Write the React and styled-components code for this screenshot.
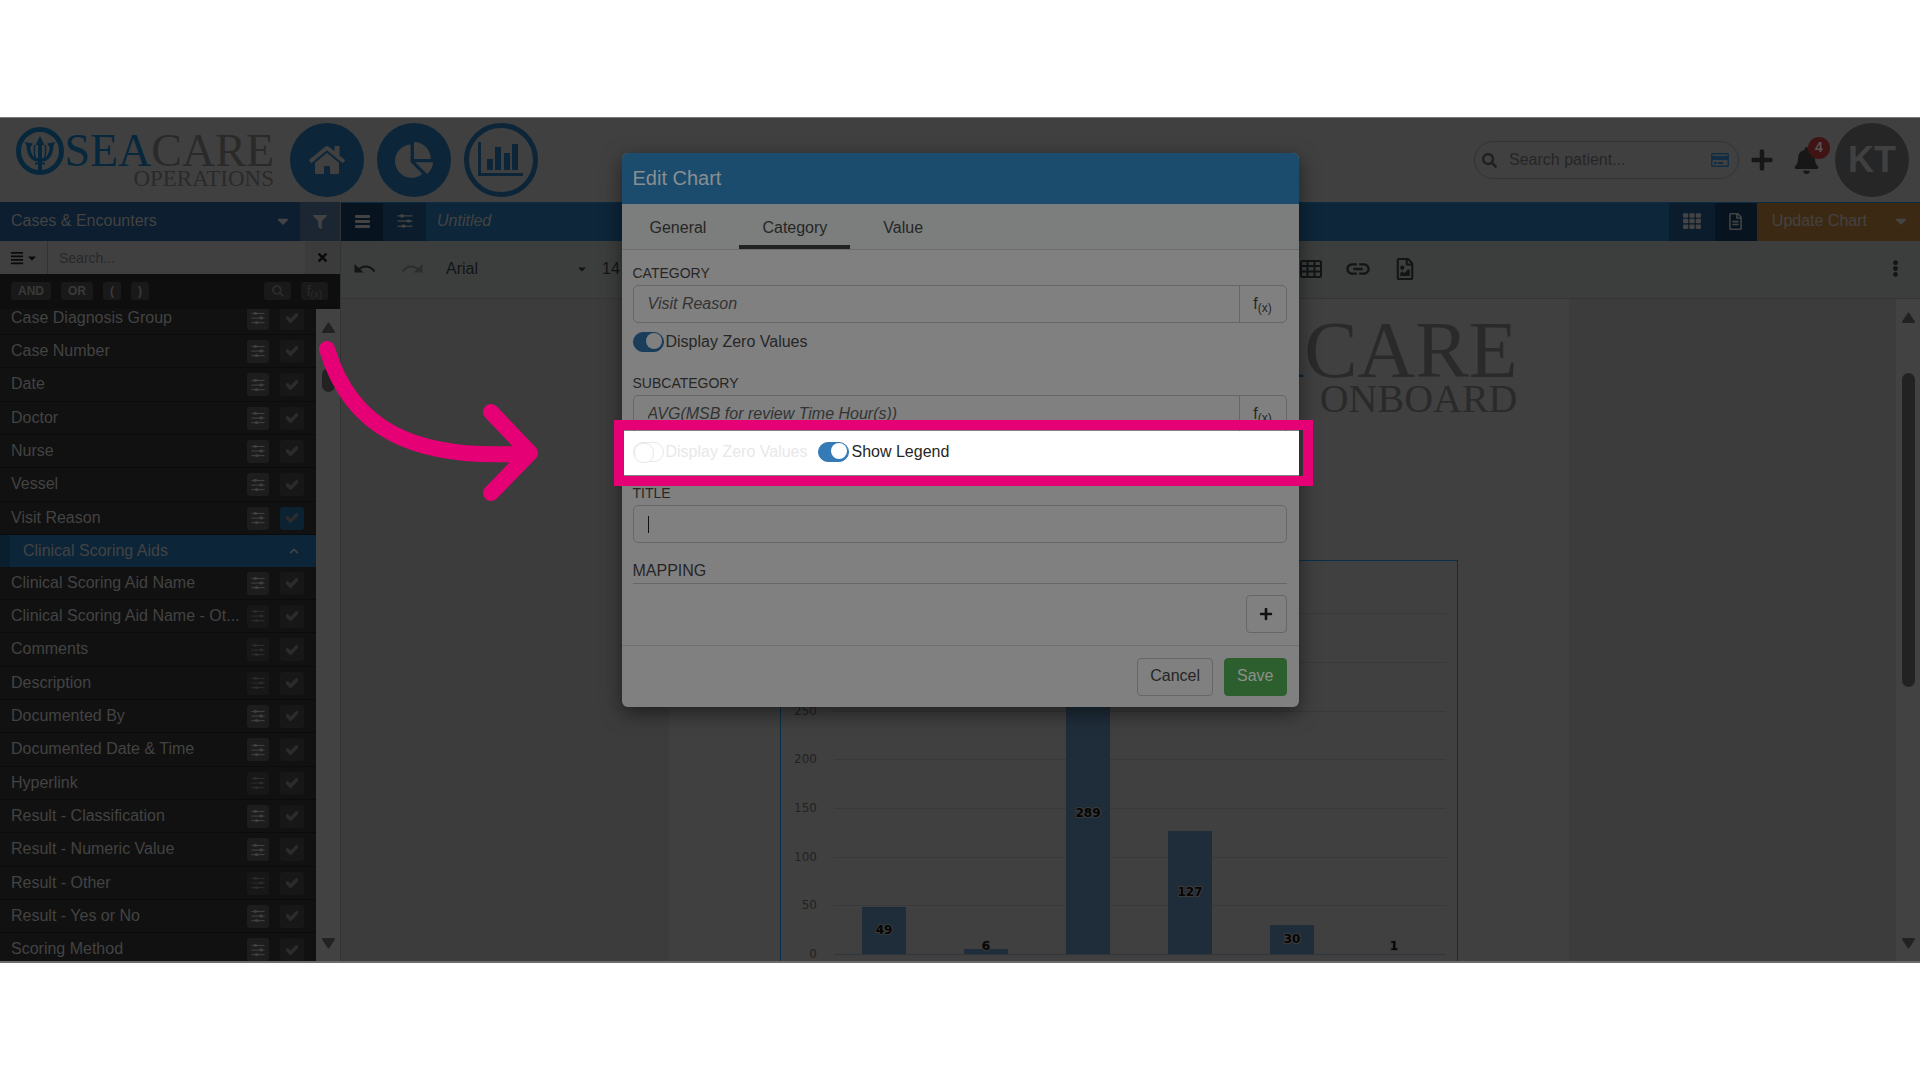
import React from 'react'
import { useState } from 'react'
import styled, { createGlobalStyle } from 'styled-components'
import {
  FaHome, FaChartPie, FaSearch, FaPlus, FaBell, FaFilter, FaTimes, FaCheck,
  FaTh, FaRegFileAlt, FaCaretDown, FaRegCreditCard, FaRegFileImage, FaAlignJustify,
  FaEllipsisV, FaChevronUp
} from 'react-icons/fa'
import { MdLink } from 'react-icons/md'

const caseFields = [
  { name: 'Case Diagnosis Group' },
  { name: 'Case Number' },
  { name: 'Date' },
  { name: 'Doctor' },
  { name: 'Nurse' },
  { name: 'Vessel' },
  { name: 'Visit Reason', checked: true },
]

const scoringFields = [
  { name: 'Clinical Scoring Aid Name' },
  { name: 'Clinical Scoring Aid Name - Ot...', dim: true },
  { name: 'Comments', dim: true },
  { name: 'Description', dim: true },
  { name: 'Documented By' },
  { name: 'Documented Date & Time' },
  { name: 'Hyperlink', dim: true },
  { name: 'Result - Classification' },
  { name: 'Result - Numeric Value' },
  { name: 'Result - Other', dim: true },
  { name: 'Result - Yes or No' },
  { name: 'Scoring Method' },
]

const bars = [49, 6, 289, 127, 30, 1]
const ticks = [0, 50, 100, 150, 200, 250, 300, 350]

function Sliders({ size = 16 }) {
  return (
    <svg width={size} height={size} viewBox="0 0 16 16" fill="currentColor" aria-hidden="true">
      <rect x="0.500" y="2.200" width="15" height="1.300" />
      <rect x="0.500" y="7.400" width="15" height="1.300" />
      <rect x="0.500" y="12.600" width="15" height="1.300" />
      <rect x="3" y="1.200" width="4" height="3.200" rx="1.500" />
      <rect x="9.500" y="6.400" width="4" height="3.200" rx="1.500" />
      <rect x="4.500" y="11.600" width="4" height="3.200" rx="1.500" />
    </svg>
  )
}

function Trident() {
  return (
    <svg width="48" height="48" viewBox="0 0 48 48" fill="none" stroke="#07273d" aria-hidden="true">
      <circle cx="24" cy="24" r="21.500" strokeWidth="5" />
      <path d="M24 14V45" strokeWidth="4" />
      <path d="M24 9L28.500 18H19.500Z" fill="#07273d" strokeWidth="0" />
      <path d="M12 17C13 29 16 33 24 33S35 29 36 17" strokeWidth="3.500" />
      <path d="M8.500 15L17 16.500L13 22ZM39.500 15L31 16.500L35 22Z" fill="#07273d" strokeWidth="0" />
      <path d="M18.500 18C18.500 26 18 29 20 33M29.500 18C29.500 26 30 29 28 33" strokeWidth="1.500" />
      <path d="M19 36.500H29" strokeWidth="2" />
    </svg>
  )
}

function Burger() {
  return (
    <svg width="15" height="13" viewBox="0 0 15 13" fill="currentColor" aria-hidden="true">
      <rect width="15" height="3" rx="1" />
      <rect y="5" width="15" height="3" rx="1" />
      <rect y="10" width="15" height="3" rx="1" />
    </svg>
  )
}

function BarsIcon() {
  return (
    <svg width="46" height="36" viewBox="0 0 46 36" fill="currentColor" aria-hidden="true">
      <path d="M0 0H3V31H45V34H0Z" />
      <rect x="9" y="17" width="6" height="11" />
      <rect x="17" y="5" width="6" height="23" />
      <rect x="26" y="11" width="6" height="17" />
      <rect x="34" y="2" width="6" height="26" />
    </svg>
  )
}

function CurvedArrow({ flip }) {
  return (
    <svg width="22" height="12" viewBox="0 0 22 12" fill="none" stroke="currentColor" aria-hidden="true">
      <g transform={flip ? 'translate(22 0) scale(-1 1)' : undefined}>
        <path d="M4 7C9 2 16 2 20.500 8.500" strokeWidth="2" />
        <path d="M0.500 1V9.500H9.500Z" fill="currentColor" strokeWidth="0" />
      </g>
    </svg>
  )
}

function TableIcon() {
  return (
    <svg width="22" height="18" viewBox="0 0 22 18" fill="none" stroke="currentColor" strokeWidth="2" aria-hidden="true">
      <rect x="1" y="1" width="20" height="16" rx="1.500" />
      <path d="M1 6H21M1 11.500H21M7.500 1V17M14.500 1V17" />
    </svg>
  )
}

function Triangle({ down }) {
  return (
    <svg width="15" height="11" viewBox="0 0 14 11" aria-hidden="true">
      <path
        d={down ? 'M1.500 1H12.500L7 9.500Z' : 'M1.500 10H12.500L7 1.500Z'}
        fill="#222" stroke="#222" strokeWidth="2" strokeLinejoin="round"
      />
    </svg>
  )
}

function FieldRow({ field }) {
  return (
    <Row>
      <span>{field.name}</span>
      <RowButton $dim={field.dim} aria-label={`Options for ${field.name}`}><Sliders size={14} /></RowButton>
      <RowButton $wide $dim $checked={field.checked} aria-label={`Select ${field.name}`}>
        <FaCheck size={12} stroke="currentColor" strokeWidth={50} />
      </RowButton>
    </Row>
  )
}

function Chart() {
  const y = (v) => 393 - v * 0.973
  return (
    <ChartSvg width="676" height="460" viewBox="0 0 676 460">
      {ticks.map((t) => (
        <g key={t}>
          <line x1="53" x2="665" y1={Math.round(y(t)) + 0.5} y2={Math.round(y(t)) + 0.5} stroke={t ? '#393939' : '#30343b'} />
          <text className="tick" x="36" y={Math.round(y(t)) + 4} textAnchor="end">{t}</text>
        </g>
      ))}
      {bars.map((v, i) => (
        <g key={v}>
          {v > 1 && <rect x={81 + i * 102} y={Math.ceil(y(v))} width="44" height={393 - Math.ceil(y(v))} fill="#1f2d3a" />}
          <text className="value" x={103 + i * 102} y={v < 10 ? 389 : Math.round(y(v / 2)) + 4} textAnchor="middle">{v}</text>
        </g>
      ))}
    </ChartSvg>
  )
}

function EditChart() {
  const [zero, setZero] = useState(true)
  const [legend, setLegend] = useState(true)
  const [title, setTitle] = useState('')
  return (
    <Modal role="dialog" aria-label="Edit Chart">
      <ModalHead>Edit Chart</ModalHead>
      <Tabs>
        <Tab>General</Tab>
        <Tab $active>Category</Tab>
        <Tab>Value</Tab>
      </Tabs>
      <ModalBody>
        <Label htmlFor="category">CATEGORY</Label>
        <InputGroup>
          <input id="category" defaultValue="Visit Reason" />
          <button>f<sub>(x)</sub></button>
        </InputGroup>
        <SwitchRow>
          <Switch><input type="checkbox" checked={zero} onChange={() => setZero(!zero)} />Display Zero Values</Switch>
        </SwitchRow>
        <Label htmlFor="subcategory">SUBCATEGORY</Label>
        <InputGroup>
          <input id="subcategory" defaultValue="AVG(MSB for review Time Hour(s))" />
          <button>f<sub>(x)</sub></button>
        </InputGroup>
        <Spotlight>
          <Switch $bright $off><input type="checkbox" disabled />Display Zero Values</Switch>
          <Switch $bright><input type="checkbox" checked={legend} onChange={() => setLegend(!legend)} />Show Legend</Switch>
        </Spotlight>
        <Label htmlFor="title">TITLE</Label>
        <InputGroup $caret={!title}>
          <input id="title" value={title} onChange={(e) => setTitle(e.target.value)} />
        </InputGroup>
        <Mapping>MAPPING</Mapping>
        <AddRow>
          <ModalButton $icon aria-label="Add mapping"><FaPlus size={14} /></ModalButton>
        </AddRow>
      </ModalBody>
      <ModalFoot>
        <ModalButton>Cancel</ModalButton>
        <ModalButton $save>Save</ModalButton>
      </ModalFoot>
    </Modal>
  )
}

function App() {
  return (
    <Page>
      <GlobalStyle />
      <Shell>
        <Header>
          <Brand>
            <Trident />
            <Wordmark $size={46} $sub={23}>
              <div><b>SEA</b>CARE</div>
              <small>OPERATIONS</small>
            </Wordmark>
          </Brand>
          <NavCircle aria-label="Home"><FaHome size={36} /></NavCircle>
          <NavCircle aria-label="Dashboards"><FaChartPie size={38} /></NavCircle>
          <NavCircle $outline aria-label="Reports"><BarsIcon /></NavCircle>
          <Spacer />
          <PatientSearch>
            <FaSearch size={15} />
            <input placeholder="Search patient..." aria-label="Search patient" />
            <FaRegCreditCard size={18} color="#132e44" />
          </PatientSearch>
          <HeaderIcon aria-label="Add"><FaPlus size={24} /></HeaderIcon>
          <HeaderIcon aria-label="Notifications"><FaBell size={27} /><Badge>4</Badge></HeaderIcon>
          <Avatar>KT</Avatar>
        </Header>
        <Content>
          <Sidebar>
            <SideHead>
              <button>Cases &amp; Encounters<FaCaretDown size={18} /></button>
              <FilterButton aria-label="Filter"><FaFilter size={14} /></FilterButton>
            </SideHead>
            <SideSearch>
              <button aria-label="View"><FaAlignJustify size={14} /><FaCaretDown size={12} /></button>
              <input placeholder="Search..." aria-label="Search fields" />
              <ClearButton aria-label="Clear"><FaTimes size={13} /></ClearButton>
            </SideSearch>
            <Operators>
              <button>AND</button>
              <button>OR</button>
              <button>(</button>
              <button>)</button>
              <Spacer />
              <OperatorIcon aria-label="Find"><FaSearch size={12} /></OperatorIcon>
              <OperatorIcon>f<sub>(x)</sub></OperatorIcon>
            </Operators>
            <ListArea>
              <FieldList>
                <Group $cut>{caseFields.map((f) => <FieldRow key={f.name} field={f} />)}</Group>
                <GroupHead>Clinical Scoring Aids<FaChevronUp size={10} /></GroupHead>
                <Group>{scoringFields.map((f) => <FieldRow key={f.name} field={f} />)}</Group>
              </FieldList>
              <ScrollTrack>
                <Triangle />
                <Thumb $top={59} $height={24} />
                <Triangle down />
              </ScrollTrack>
            </ListArea>
          </Sidebar>
          <Main>
            <TitleBar>
              <BarButton $dark aria-label="Menu"><Burger /></BarButton>
              <BarButton aria-label="Settings"><Sliders /></BarButton>
              <em>Untitled</em>
              <Spacer />
              <BarButton $wide aria-label="Grid"><FaTh size={18} /></BarButton>
              <BarButton $dark aria-label="Document"><FaRegFileAlt size={17} /></BarButton>
              <UpdateButton>Update Chart</UpdateButton>
              <UpdateButton $caret aria-label="More"><FaCaretDown size={18} /></UpdateButton>
            </TitleBar>
            <Toolbar>
              <Tool aria-label="Undo"><CurvedArrow /></Tool>
              <Tool $dim aria-label="Redo"><CurvedArrow flip /></Tool>
              <FontPicker>
                <select aria-label="Font"><option>Arial</option></select>
                <FaCaretDown size={12} />
              </FontPicker>
              <SizePicker aria-label="Font size"><option>14</option></SizePicker>
              <Spacer />
              <RightTools>
                <Tool aria-label="Table"><TableIcon /></Tool>
                <Tool aria-label="Link"><MdLink size={28} /></Tool>
                <Tool aria-label="Image"><FaRegFileImage size={22} /></Tool>
                <Spacer />
                <Tool aria-label="More tools"><FaEllipsisV size={17} /></Tool>
              </RightTools>
            </Toolbar>
            <Canvas>
              <Desk>
                <Paper>
                  <Wordmark $size={80} $sub={40}>
                    <div><b>SEA</b>CARE</div>
                    <small>ONBOARD</small>
                  </Wordmark>
                  <ChartBox><Chart /></ChartBox>
                </Paper>
              </Desk>
              <ScrollTrack>
                <Triangle />
                <Thumb $top={74} $height={314} />
                <Triangle down />
              </ScrollTrack>
            </Canvas>
          </Main>
        </Content>
        <Backdrop><EditChart /></Backdrop>
        <Pointer width="230" height="180" viewBox="0 0 230 180" aria-hidden="true">
          <path d="M17 21C40 98 100 134 220 125M181 84L220 125L181 165" />
        </Pointer>
      </Shell>
    </Page>
  )
}

const GlobalStyle = createGlobalStyle`
  * { box-sizing: border-box; }
  body {
    margin: 0;
    background: #fff;
    font-family: 'Liberation Sans', Arial, sans-serif;
    font-size: 16px;
  }
  button, input, select {
    font: inherit;
    color: inherit;
    background: none;
    border: 0;
    border-radius: 0;
    margin: 0;
    padding: 0;
    outline: 0;
  }
  button {
    display: flex;
    align-items: center;
    justify-content: center;
  }
  input { min-width: 0; }
  svg { flex: none; }
`

const Page = styled.div`
  display: flex;
  flex-direction: column;
  height: 100vh;
  padding: 117px 0;
`

const Shell = styled.div`
  position: relative;
  flex: 1;
  min-height: 0;
  display: flex;
  flex-direction: column;
  overflow: hidden;
  background: #404040;
  border-top: 1px solid #777;
  border-bottom: 2px solid #6b6b6b;
`

const Spacer = styled.div`
  flex: 1;
`

const Header = styled.header`
  display: flex;
  align-items: center;
  flex: none;
  height: 84px;
  padding: 0 11px 0 16px;
`

const Brand = styled.div`
  display: flex;
  justify-content: space-between;
  width: 258px;
  height: 54px;
  margin-right: 16px;
  svg { margin-top: -6px; }
`

const Wordmark = styled.div`
  display: flex;
  flex-direction: column;
  align-items: flex-end;
  font-family: 'Liberation Serif', 'Times New Roman', serif;
  color: #2a2a2a;
  div {
    font-size: ${({ $size }) => $size}px;
    line-height: ${({ $size }) => ($size > 60 ? 62 : 36)}px;
  }
  b {
    font-weight: normal;
    color: #07273d;
  }
  small {
    font-size: ${({ $sub }) => $sub}px;
    line-height: ${({ $sub }) => ($sub > 30 ? 36 : 20)}px;
  }
`

const NavCircle = styled.button`
  width: 74px;
  height: 74px;
  margin-right: 13px;
  border-radius: 50%;
  color: ${({ $outline }) => ($outline ? '#0c2538' : '#404040')};
  background: ${({ $outline }) => ($outline ? 'none' : '#0c2538')};
  border: ${({ $outline }) => ($outline ? '5px solid #0c2538' : '0')};
`

const PatientSearch = styled.div`
  display: flex;
  align-items: center;
  width: 265px;
  height: 38px;
  padding: 0 9px 0 7px;
  border: 1px solid #333;
  border-radius: 19px;
  color: #1f1f1f;
  input {
    flex: 1;
    padding-left: 12px;
    &::placeholder { color: #262626; opacity: 1; }
  }
`

const HeaderIcon = styled.button`
  position: relative;
  width: 24px;
  margin-left: 11px;
  color: #171717;
  & + & { margin-left: 20px; }
`

const Badge = styled.span`
  position: absolute;
  top: -10px;
  right: -12px;
  width: 22px;
  height: 22px;
  border-radius: 11px;
  background: #401414;
  color: #555;
  font-size: 14px;
  line-height: 20px;
  font-weight: bold;
`

const Avatar = styled.div`
  display: flex;
  align-items: center;
  justify-content: center;
  width: 74px;
  height: 74px;
  margin-left: 17px;
  border-radius: 50%;
  background: #262626;
  color: #404040;
  font-size: 36px;
  font-weight: bold;
`

const Content = styled.div`
  display: flex;
  flex: 1;
  min-height: 0;
`

const Sidebar = styled.aside`
  display: flex;
  flex-direction: column;
  flex: none;
  width: 341px;
  background: #111;
  color: #434343;
  border-right: 1px solid #333;
`

const SideHead = styled.div`
  display: flex;
  flex: none;
  height: 39px;
  background: #0c1e2f;
  button:first-child {
    flex: 1;
    justify-content: space-between;
    padding: 0 8px 2px 11px;
  }
`

const FilterButton = styled.button`
  width: 40px;
  background: #1b2632;
`

const SideSearch = styled.div`
  display: flex;
  flex: none;
  height: 33px;
  background: #404040;
  color: #0a0a0a;
  font-size: 14px;
  button:first-child {
    width: 48px;
    gap: 2px;
    border-right: 1px solid #333;
  }
  input {
    flex: 1;
    padding-left: 11px;
    &::placeholder { color: #282828; opacity: 1; }
  }
`

const ClearButton = styled.button`
  width: 35px;
  background: #3b3b3b;
`

const Operators = styled.div`
  display: flex;
  align-items: center;
  flex: none;
  gap: 10px;
  height: 35px;
  padding: 0 12px 1px 11px;
  background: #0e0e0e;
  button {
    height: 18px;
    padding: 0 7px 1px;
    border-radius: 3px;
    background: #191919;
    color: #3a3a3a;
    font-size: 12px;
    font-weight: bold;
  }
`

const OperatorIcon = styled.button`
  && {
    width: 27px;
    padding: 0;
    font-size: 14px;
    font-weight: normal;
    color: #2b2b2b;
  }
  sub {
    padding-top: 6px;
    font-size: 10px;
  }
`

const ListArea = styled.div`
  display: flex;
  flex: 1;
  min-height: 0;
`

const FieldList = styled.div`
  flex: 1;
  min-width: 0;
  overflow: hidden;
`

const Group = styled.div`
  margin-top: ${({ $cut }) => ($cut ? '-7px' : '0')};
`

const Row = styled.div`
  display: flex;
  align-items: center;
  height: 33px;
  padding: 0 12px 0 11px;
  border-bottom: 1px solid #0b0b0b;
  &:nth-child(3n) { height: 34px; }
  span {
    flex: 1;
    padding-bottom: 1px;
    white-space: nowrap;
  }
`

const RowButton = styled.button`
  flex: none;
  width: ${({ $wide }) => ($wide ? 24 : 22)}px;
  height: 23px;
  margin-left: ${({ $wide }) => ($wide ? 11 : 0)}px;
  border-radius: 3px;
  color: ${({ $dim }) => ($dim ? '#2c2c2c' : '#404040')};
  background: ${({ $checked, $dim }) => ($checked ? '#0b2233' : $dim ? '#171717' : '#1d1d1d')};
`

const GroupHead = styled.div`
  display: flex;
  align-items: center;
  justify-content: space-between;
  height: 32px;
  padding: 0 17px 1px 13px;
  border-left: 10px solid #0a1f2e;
  background: #0c2538;
`

const ScrollTrack = styled.div`
  position: relative;
  display: flex;
  flex-direction: column;
  align-items: center;
  justify-content: space-between;
  flex: none;
  width: 24px;
  padding: 13px 0 12px;
  background: #424242;
`

const Thumb = styled.div`
  position: absolute;
  top: ${({ $top }) => $top}px;
  width: 13px;
  height: ${({ $height }) => $height}px;
  border-radius: 7px;
  background: #222;
`

const Main = styled.main`
  display: flex;
  flex-direction: column;
  flex: 1;
  min-width: 0;
`

const TitleBar = styled.div`
  display: flex;
  flex: none;
  height: 39px;
  background: #0d2639;
  border-top: 1px solid #0b2c42;
  color: #434343;
  em {
    padding: 9px 11px;
    line-height: 18px;
  }
`

const BarButton = styled.button`
  width: ${({ $wide, $dark }) => ($wide ? 46 : $dark ? 42 : 43)}px;
  background: ${({ $dark }) => ($dark ? '#07141f' : '#0b1d2c')};
  padding-bottom: 2px;
`

const UpdateButton = styled.button`
  padding: 0 15px 2px;
  background: #3c2913;
  ${({ $caret }) => $caret && 'width: 38px; padding: 0 0 2px;'}
`

const Toolbar = styled.div`
  display: flex;
  align-items: center;
  flex: none;
  height: 58px;
  padding: 0 14px 2px 13px;
  background: #3c3e3d;
  border-bottom: 1px solid #353535;
  color: #111516;
`

const Tool = styled.button`
  min-width: 22px;
  height: 30px;
  margin-right: 25px;
  color: ${({ $dim }) => ($dim ? '#2b2e2e' : 'inherit')};
`

const FontPicker = styled.div`
  display: flex;
  align-items: center;
  width: 142px;
  margin-left: -2px;
  select {
    flex: 1;
    appearance: none;
  }
`

const SizePicker = styled.select`
  margin-left: 14px;
  appearance: none;
`

const RightTools = styled.div`
  display: flex;
  align-items: center;
  width: 606px;
  button { margin-right: 22px; }
  button:last-child { margin-right: 0; }
`

const Canvas = styled.div`
  display: flex;
  flex: 1;
  min-height: 0;
`

const Desk = styled.div`
  display: flex;
  justify-content: center;
  flex: 1;
  min-width: 0;
  overflow: hidden;
  background: #3c3c3c;
`

const Paper = styled.div`
  width: 900px;
  padding: 20px 51px 0 111px;
  background: #404040;
`

const ChartBox = styled.div`
  width: 678px;
  height: 480px;
  margin-top: 143px;
  border: 1px solid #08304a;
`

const ChartSvg = styled.svg`
  display: block;
  font-family: 'DejaVu Sans', sans-serif;
  font-size: 12px;
  .tick { fill: #222; }
  .value {
    fill: #050505;
    font-weight: bold;
    stroke: #3a3a3a;
    stroke-width: 2px;
    paint-order: stroke;
  }
`

const Backdrop = styled.div`
  position: absolute;
  inset: 0;
  display: flex;
  align-items: flex-start;
  justify-content: center;
  padding-top: 35px;
`

const Modal = styled.div`
  width: 677px;
  border-radius: 6px;
  background: #808080;
  color: #262626;
  box-shadow: 0 6px 20px rgba(0, 0, 0, 0.5);
`

const ModalHead = styled.div`
  height: 51px;
  padding: 0 11px;
  border-radius: 6px 6px 0 0;
  background: #1b4c6d;
  color: #8a8f92;
  font-size: 20px;
  line-height: 50px;
`

const Tabs = styled.div`
  display: flex;
  gap: 10px;
  height: 46px;
  padding-left: 5px;
  background: #7b7e7c;
  border-bottom: 1px solid #6c6e6d;
`

const Tab = styled.button`
  padding: 2px 23px 0;
  border-bottom: ${({ $active }) => ($active ? '4px solid #222' : '0')};
  ${({ $active }) => $active && 'padding-top: 6px;'}
`

const ModalBody = styled.div`
  display: flex;
  flex-direction: column;
  padding: 13px 12px 12px 11px;
`

const Label = styled.label`
  height: 22px;
  font-size: 14px;
  line-height: 20px;
`

const InputGroup = styled.div`
  position: relative;
  display: flex;
  height: 38px;
  border: 1px solid #666;
  border-radius: 5px;
  input {
    flex: 1;
    padding: 0 14px 1px;
    font-style: italic;
    color: #333;
  }
  button {
    width: 47px;
    border-left: 1px solid #666;
  }
  sub {
    font-size: 12px;
    padding-top: 8px;
  }
  &::after {
    content: '';
    display: ${({ $caret }) => ($caret ? 'block' : 'none')};
    position: absolute;
    left: 14px;
    top: 10px;
    width: 1px;
    height: 17px;
    background: #111;
  }
`

const SwitchRow = styled.div`
  display: flex;
  margin: 9px 0 21px;
`

const Switch = styled.label`
  display: flex;
  align-items: center;
  gap: 2px;
  height: 20px;
  color: ${({ $off }) => ($off ? '#e8e8e8' : '#262626')};
  input {
    width: 31px;
    height: 20px;
    border: 1px solid #e8e8e8;
    border-radius: 10px;
    appearance: none;
    &::before {
      content: '';
      display: block;
      width: 18px;
      height: 18px;
      border: 1px solid #e8e8e8;
      border-radius: 9px;
      background: ${({ $bright }) => ($bright ? '#fff' : '#808080')};
    }
    &:checked {
      background: ${({ $bright }) => ($bright ? '#337ab7' : '#1a3d5c')};
      border-color: ${({ $bright }) => ($bright ? '#337ab7' : '#1a3d5c')};
    }
    &:checked::before {
      width: 16px;
      height: 16px;
      margin-left: 12px;
      border: 0;
    }
  }
`

const Spotlight = styled.div`
  position: relative;
  z-index: 2;
  display: flex;
  align-items: center;
  gap: 11px;
  height: 44px;
  margin: -2px -12px 8px -9px;
  padding: 0 0 2px 9px;
  background: #fff;
  &::after {
    content: '';
    position: absolute;
    inset: -11px -14px -11px -10px;
    border: 10px solid #e50075;
    pointer-events: none;
  }
`

const Mapping = styled.div`
  height: 24px;
  margin-top: 17px;
  border-bottom: 1px solid #666;
  line-height: 22px;
`

const AddRow = styled.div`
  display: flex;
  justify-content: flex-end;
  margin-top: 11px;
`

const ModalButton = styled.button`
  height: 38px;
  padding: 0 12px 2px;
  border: 1px solid ${({ $save }) => ($save ? '#2b5f2c' : '#666')};
  border-radius: 4px;
  background: ${({ $save }) => ($save ? '#2d5f2e' : '#808080')};
  color: ${({ $save }) => ($save ? '#8c918c' : '#262626')};
  ${({ $icon }) => $icon && 'width: 41px; padding: 0; color: #111;'}
`

const ModalFoot = styled.div`
  display: flex;
  justify-content: flex-end;
  gap: 11px;
  padding: 12px 12px 11px;
  border-top: 1px solid #707070;
`

const Pointer = styled.svg`
  position: absolute;
  left: 310px;
  top: 210px;
  pointer-events: none;
  path {
    fill: none;
    stroke: #e50075;
    stroke-width: 16px;
    stroke-linecap: round;
    stroke-linejoin: round;
  }
`

export default App
